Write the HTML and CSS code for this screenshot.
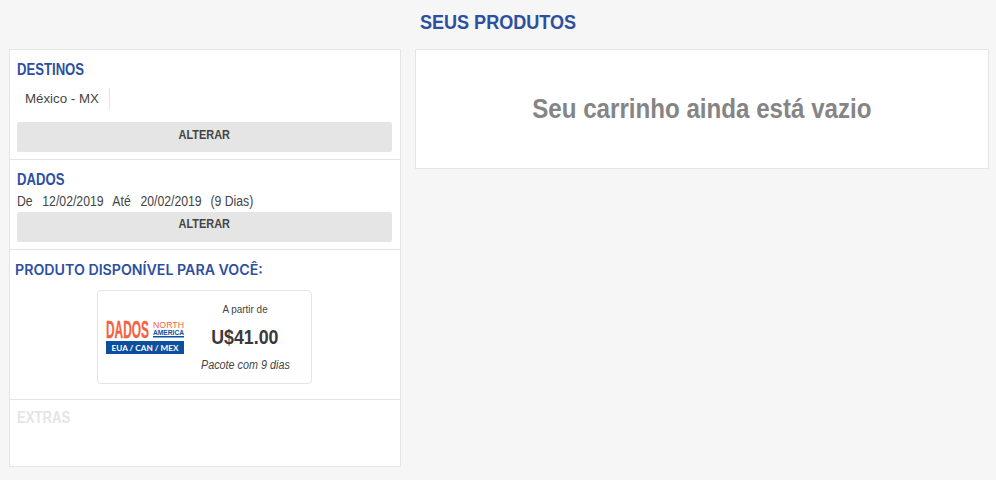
FILE: index.html
```html
<!DOCTYPE html>
<html lang="pt-BR">
<head>
  <meta charset="UTF-8" />
  <title>Seus produtos</title>
  <link rel="stylesheet" href="styles.css">
</head>
<body>
  <h1 class="page-title">SEUS PRODUTOS</h1>
  <div class="columns">
    <div class="sidebar">
      <section class="block block-destinos">
        <h2 class="block-title">DESTINOS</h2>
        <div class="tags"><span class="tag">México - MX</span></div>
        <button class="btn-alterar"><span>ALTERAR</span></button>
      </section>
      <section class="block block-dados">
        <h2 class="block-title">DADOS</h2>
        <p class="dates"><span class="date-label">De</span><span>12/02/2019</span><span class="date-label">Até</span><span>20/02/2019</span><span>(9 Dias)</span></p>
        <button class="btn-alterar"><span>ALTERAR</span></button>
      </section>
      <section class="block block-produto">
        <h2 class="produto-title">PRODUTO DISPONÍVEL PARA VOCÊ:</h2>
        <div class="card">
          <svg class="logo" width="78" height="34" viewBox="0 0 78 34">
            <text class="logo-dados" x="0" y="18" textLength="43" lengthAdjust="spacingAndGlyphs">DADOS</text>
            <text class="logo-north" x="47" y="8" textLength="31" lengthAdjust="spacingAndGlyphs">NORTH</text>
            <text class="logo-america" x="47" y="15" textLength="31" lengthAdjust="spacingAndGlyphs">AMERICA</text>
            <rect class="logo-blue" x="47" y="16" width="31" height="1.5"/>
            <rect class="logo-blue" x="0" y="21" width="78" height="13"/>
            <text class="logo-bar" x="39" y="30.5" text-anchor="middle" textLength="67" lengthAdjust="spacingAndGlyphs">EUA / CAN / MEX</text>
          </svg>
          <div class="price">
            <span class="price-from">A partir de</span>
            <strong class="price-value">U$41.00</strong>
            <em class="price-days">Pacote com 9 dias</em>
          </div>
        </div>
      </section>
      <section class="block block-extras">
        <h2 class="block-title">EXTRAS</h2>
      </section>
    </div>
    <div class="cart">
      <p class="cart-empty">Seu carrinho ainda está vazio</p>
    </div>
  </div>
</body>
</html>
```

FILE: styles.css
```css
/* No narrow family is installed, so the condensed text is squeezed with scaleX */
body {
  margin: 0;
  background: #f6f6f6;
  color: #444;
  font-family: "Liberation Sans", Arial, sans-serif;
}

.page-title {
  margin: 0;
  height: 49px;
  padding-top: 11px;
  box-sizing: border-box;
  text-align: center;
  font-size: 21px;
  line-height: 22px;
  color: #2c50a0;
  transform: scaleX(0.86);
}

.columns {
  display: flex;
  align-items: flex-start;
  gap: 14px;
  padding: 0 7px 0 9px;
}

.sidebar {
  width: 392px;
  height: 418px;
  box-sizing: border-box;
  flex: none;
  background: #fff;
  border: 1px solid #e5e5e5;
}

.block {
  box-sizing: border-box;
  padding: 0 7px;
  border-bottom: 1px solid #e5e5e5;
}

.block-destinos { height: 110px; padding-top: 11px; }
.block-dados { height: 90px; padding-top: 11px; }
.block-produto { height: 150px; padding-top: 11px; }
.block-extras { border-bottom: 0; padding-top: 9px; }

.block-title {
  margin: 0;
  font-size: 16px;
  line-height: 18px;
  color: #2c50a0;
  transform: scaleX(0.82);
  transform-origin: left;
}

.block-extras .block-title {
  color: #e5e5e5;
}

.tags {
  display: flex;
  margin-top: 9px;
  height: 22px;
}

.tag {
  padding: 0 10px 0 8px;
  border-right: 1px solid #e5e5e5;
  font-size: 13.3px;
  line-height: 22px;
}

.block-destinos .btn-alterar {
  margin-top: 12px;
  padding-bottom: 4px;
}

.btn-alterar {
  display: block;
  width: 375px;
  height: 30px;
  padding: 0 0 6px;
  border: 0;
  border-radius: 2px;
  background: #e5e5e5;
  color: #444;
  font-family: "Liberation Sans", Arial, sans-serif;
  font-size: 12px;
  font-weight: bold;
}

.btn-alterar span {
  display: inline-block;
  transform: scaleX(0.91);
}

.dates {
  display: flex;
  gap: 10px;
  margin: 4px 0 2px;
  height: 17px;
  font-size: 14px;
  line-height: 17px;
  transform: scaleX(0.875);
  transform-origin: left;
}

.date-label {
  margin-right: 1px;
}

.produto-title {
  margin: 0 0 0 -2px;
  font-family: Inter, Lato, sans-serif;
  font-size: 14.2px;
  line-height: 18px;
  font-weight: 600;
  color: #2c50a0;
}

.card {
  display: flex;
  align-items: center;
  box-sizing: border-box;
  width: 215px;
  height: 94px;
  margin: 11px 0 0 80px;
  padding: 0 8px;
  border: 1px solid #e5e5e5;
  border-radius: 4px;
}

.logo {
  flex: none;
  overflow: visible;
}

.logo-dados {
  font-size: 24px;
  font-weight: bold;
  fill: #f4623f;
  stroke: #f4623f;
  stroke-width: 0.3px;
}

.logo-north {
  font-size: 9.5px;
  fill: #f4623f;
}

.logo-america {
  font-size: 8px;
  font-weight: bold;
  fill: #0b4f9e;
}

.logo-blue {
  fill: #0b4f9e;
}

.logo-bar {
  font-family: Lato, sans-serif;
  font-size: 8.2px;
  font-weight: bold;
  fill: #fff;
}

.price {
  flex: 1;
  display: flex;
  flex-direction: column;
  align-items: center;
  margin-left: 3px;
}

.price-from {
  font-size: 11px;
  line-height: 13px;
  transform: scaleX(0.9);
}

.price-value {
  margin-top: 10px;
  font-size: 20px;
  line-height: 23px;
  color: #3a3a3a;
  transform: scaleX(0.89);
}

.price-days {
  margin-top: 9px;
  font-size: 12px;
  line-height: 14px;
  transform: scaleX(0.9);
}

.cart {
  flex: 1;
  height: 120px;
  box-sizing: border-box;
  display: flex;
  justify-content: center;
  align-items: center;
  background: #fff;
  border: 1px solid #e5e5e5;
}

.cart-empty {
  margin: 0;
  font-size: 28px;
  font-weight: bold;
  color: #858585;
  transform: scaleX(0.862);
}
```
